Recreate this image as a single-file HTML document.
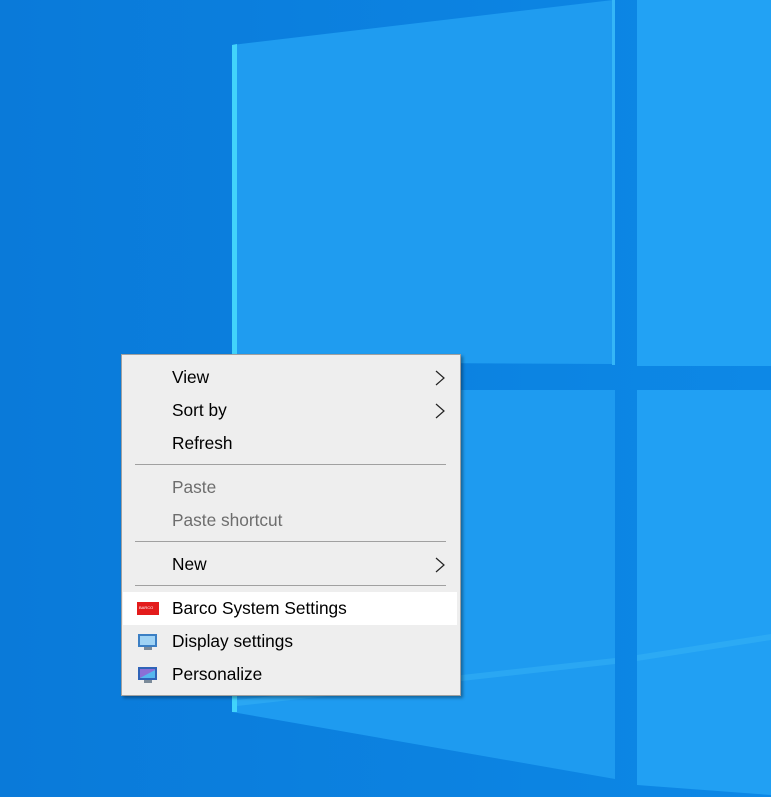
<!DOCTYPE html>
<html><head><style>
html,body{margin:0;padding:0;width:771px;height:797px;overflow:hidden;background:#0b80de}
svg.bg{position:absolute;left:0;top:0}
.menu{position:absolute;left:121px;top:354px;width:338px;height:340px;background:#eeeeee;border:1px solid #a0a0a0;box-shadow:2px 2px 3px rgba(0,0,0,.35);font-family:"Liberation Sans",sans-serif;font-size:17.3px;color:#000}
.it{position:absolute;left:1px;width:334px;height:33px;line-height:33px}
.it span{position:absolute;left:49px}
.dis{color:#6d6d6d}
.sep{position:absolute;left:13px;width:311px;height:1px;background:#a0a0a0}
.arr{position:absolute;left:310px;top:9px}
.hl{background:#fff}
.ic{position:absolute;left:13px;top:8px}
</style></head><body>
<svg class="bg" width="771" height="797">
<defs>
<linearGradient id="g" x1="0" y1="0" x2="1" y2="0"><stop offset="0" stop-color="#0a7ad9"/><stop offset="1" stop-color="#0d88e6"/></linearGradient>
</defs>
<rect width="771" height="797" fill="url(#g)"/>
<polygon points="232,45 613,0 613,364 232,362" fill="#1f9cf0"/>
<polygon points="637,0 771,0 771,366 637,366" fill="#22a2f4"/>
<polygon points="232,390 615,390 615,779 232,712" fill="#1e9bf0"/>
<polygon points="637,390 771,390 771,795 637,785" fill="#21a0f3"/>
<polygon points="232,45 237,44 237,712 232,712" fill="#41d3fb"/>
<polygon points="612,0 615,0 615,365 612,365" fill="#35b6f7"/>
<polygon points="237,700 615,658 615,664 237,706" fill="#3ab6f7" opacity=".45"/>
<polygon points="637,655 771,634 771,640 637,661" fill="#3ab6f7" opacity=".45"/>
</svg>
<div class="menu">
<div class="it" style="top:6px"><span>View</span><svg class="arr" width="14" height="16"><path d="M3 1 L11 8 L3 15" fill="none" stroke="#222" stroke-width="1.2"/></svg></div>
<div class="it" style="top:39px"><span>Sort by</span><svg class="arr" width="14" height="16"><path d="M3 1 L11 8 L3 15" fill="none" stroke="#222" stroke-width="1.2"/></svg></div>
<div class="it" style="top:72px"><span>Refresh</span></div>
<div class="sep" style="top:109px"></div>
<div class="it dis" style="top:116px"><span>Paste</span></div>
<div class="it dis" style="top:149px"><span>Paste shortcut</span></div>
<div class="sep" style="top:186px"></div>
<div class="it" style="top:193px"><span>New</span><svg class="arr" width="14" height="16"><path d="M3 1 L11 8 L3 15" fill="none" stroke="#222" stroke-width="1.2"/></svg></div>
<div class="sep" style="top:230px"></div>
<div class="it hl" style="top:237px"><svg class="ic" width="24" height="16"><rect x="1" y="2" width="22" height="13" fill="#e31b1b"/><text x="3" y="9" font-size="4" fill="#fff" font-family="Liberation Sans">BARCO</text></svg><span>Barco System Settings</span></div>
<div class="it" style="top:270px"><svg class="ic" width="24" height="18"><rect x="2" y="1" width="19" height="13" fill="#3b7fc4"/><rect x="4" y="3" width="15" height="9" fill="#9fd3f5"/><rect x="8" y="14" width="8" height="3" fill="#7a8a99"/></svg><span>Display settings</span></div>
<div class="it" style="top:303px"><svg class="ic" width="24" height="18"><rect x="2" y="1" width="19" height="13" fill="#2f63b8"/><polygon points="4,3 19,3 19,12 4,12" fill="#8b6fd6"/><polygon points="4,12 19,4 19,12" fill="#55b7ee"/><rect x="8" y="14" width="8" height="3" fill="#7a8a99"/></svg><span>Personalize</span></div>
</div>
</body></html>
